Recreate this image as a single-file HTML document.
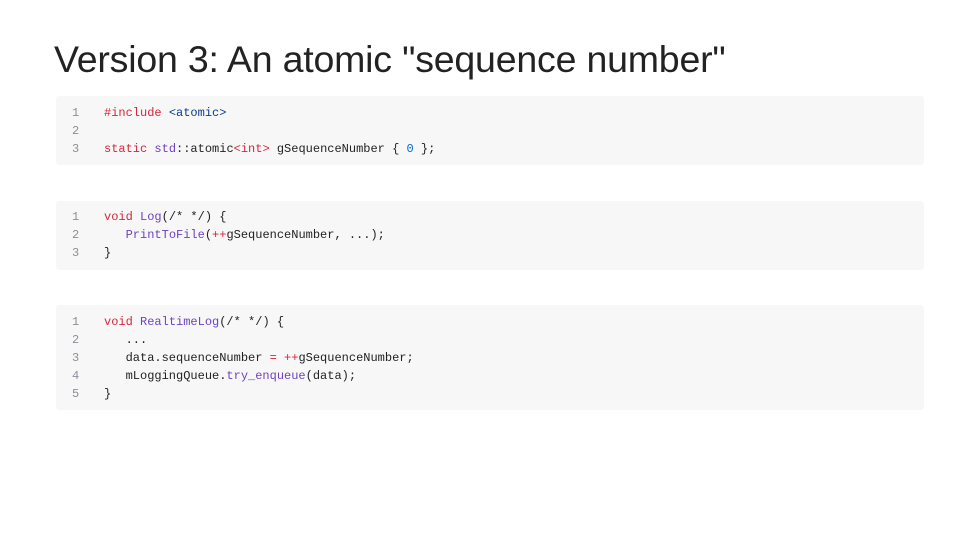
<!DOCTYPE html>
<html><head><meta charset="utf-8"><style>
html,body{margin:0;padding:0;background:#fff;width:980px;height:552px;overflow:hidden}
h1{position:absolute;left:54px;top:37px;margin:0;font:37.5px/44px "Liberation Sans",sans-serif;color:#222;font-weight:normal;white-space:nowrap;letter-spacing:-0.2px}
.blk{position:absolute;left:56px;width:868px;background:#f7f7f7;border-radius:3px}
.ln{position:absolute;left:0;width:868px;height:18px;font:12px/18px "Liberation Mono",monospace;color:#222;white-space:pre}
.n{position:absolute;left:16px;color:#8a8f98}
.c{position:absolute;left:48px}
.r{color:#d7263d}.p{color:#6f42c1}.b{color:#0b3d91}.bl{color:#0069d9}
</style></head><body>
<h1>Version 3: An atomic "sequence number"</h1>
<div class="blk" style="top:96px;height:69px">
<div class="ln" style="top:8px"><span class="n">1</span><span class="c"><span class="r">#include</span> <span class="b">&lt;atomic&gt;</span></span></div>
<div class="ln" style="top:26px"><span class="n">2</span></div>
<div class="ln" style="top:44px"><span class="n">3</span><span class="c"><span class="r">static</span> <span class="p">std</span>::atomic<span class="r">&lt;int&gt;</span> gSequenceNumber { <span class="bl">0</span> };</span></div>
</div>
<div class="blk" style="top:201px;height:69px">
<div class="ln" style="top:7px"><span class="n">1</span><span class="c"><span class="r">void</span> <span class="p">Log</span>(/* */) {</span></div>
<div class="ln" style="top:25px"><span class="n">2</span><span class="c">   <span class="p">PrintToFile</span>(<span class="r">++</span>gSequenceNumber, ...);</span></div>
<div class="ln" style="top:43px"><span class="n">3</span><span class="c">}</span></div>
</div>
<div class="blk" style="top:305px;height:105px">
<div class="ln" style="top:8px"><span class="n">1</span><span class="c"><span class="r">void</span> <span class="p">RealtimeLog</span>(/* */) {</span></div>
<div class="ln" style="top:26px"><span class="n">2</span><span class="c">   ...</span></div>
<div class="ln" style="top:44px"><span class="n">3</span><span class="c">   data.sequenceNumber <span class="r">=</span> <span class="r">++</span>gSequenceNumber;</span></div>
<div class="ln" style="top:62px"><span class="n">4</span><span class="c">   mLoggingQueue.<span class="p">try_enqueue</span>(data);</span></div>
<div class="ln" style="top:80px"><span class="n">5</span><span class="c">}</span></div>
</div>
</body></html>
